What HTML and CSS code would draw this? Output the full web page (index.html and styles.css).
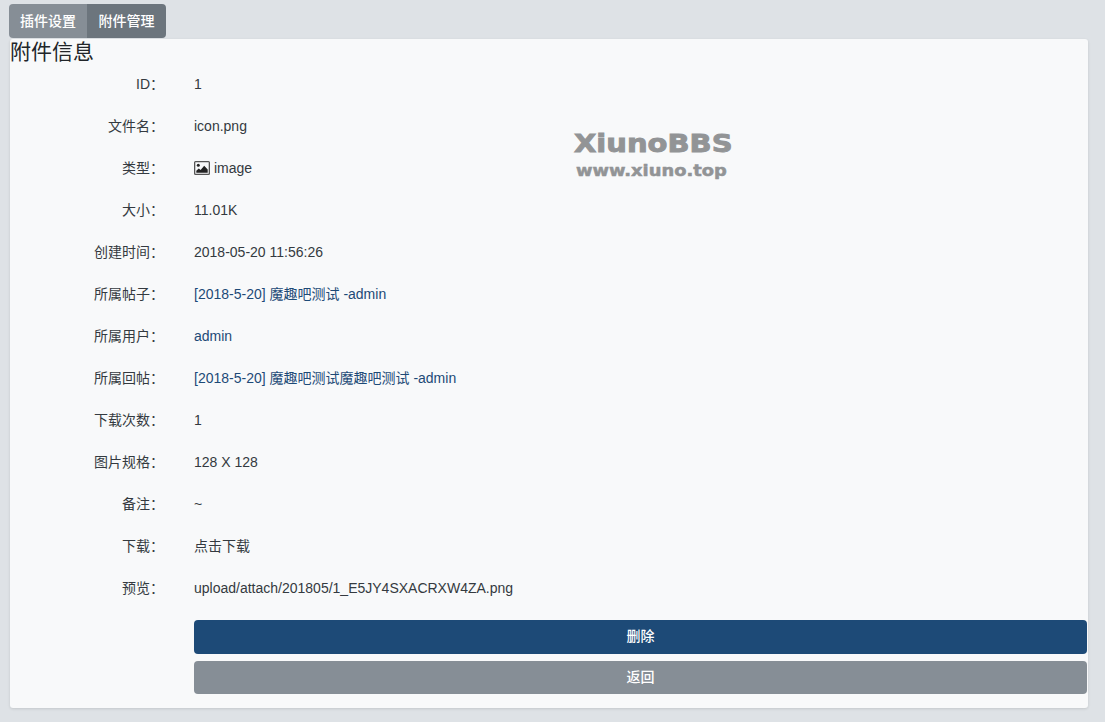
FILE: index.html
```html
<!DOCTYPE html>
<html lang="zh-CN">
<head>
<meta charset="utf-8">
<title>附件管理</title>
<link rel="stylesheet" href="styles.css">
</head>
<body>
<nav class="tabs">
  <a class="tab">插件设置</a>
  <a class="tab tab-active">附件管理</a>
</nav>
<main class="card">
  <h4 class="title">附件信息</h4>
  <div class="watermark" aria-label="XiunoBBS www.xiuno.top">
    <div class="wm-name">XiunoBBS</div>
    <div class="wm-url">www.xiuno.top</div>
  </div>
  <dl class="info">
    <div class="row"><dt>ID：</dt><dd>1</dd></div>
    <div class="row"><dt>文件名：</dt><dd>icon.png</dd></div>
    <div class="row"><dt>类型：</dt><dd class="type">
      <svg class="icon" viewBox="0 0 16 14" width="16" height="14"><path fill="#555" fill-rule="evenodd" d="M1.500 0h13A1.500 1.500 0 0 1 16 1.500v11a1.500 1.500 0 0 1-1.500 1.500h-13A1.500 1.500 0 0 1 0 12.500v-11A1.500 1.500 0 0 1 1.500 0zM1.300 1.300v11.400h13.400V1.300z"/><circle cx="4.300" cy="4.300" r="1.500" fill="#222"/><path fill="#222" d="M2.300 11.700V9.700l2.500-2.300 1.800 1.500 3.600-4.200 3.500 3.800v3.200z"/></svg>
      image</dd></div>
    <div class="row"><dt>大小：</dt><dd>11.01K</dd></div>
    <div class="row"><dt>创建时间：</dt><dd>2018-05-20 11:56:26</dd></div>
    <div class="row"><dt>所属帖子：</dt><dd class="link">[2018-5-20] 魔趣吧测试 -admin</dd></div>
    <div class="row"><dt>所属用户：</dt><dd class="link">admin</dd></div>
    <div class="row"><dt>所属回帖：</dt><dd class="link">[2018-5-20] 魔趣吧测试魔趣吧测试 -admin</dd></div>
    <div class="row"><dt>下载次数：</dt><dd>1</dd></div>
    <div class="row"><dt>图片规格：</dt><dd>128 X 128</dd></div>
    <div class="row"><dt>备注：</dt><dd>~</dd></div>
    <div class="row"><dt>下载：</dt><dd class="dark">点击下载</dd></div>
    <div class="row"><dt>预览：</dt><dd class="dark">upload/attach/201805/1_E5JY4SXACRXW4ZA.png</dd></div>
  </dl>
  <div class="actions">
    <button class="btn btn-primary">删除</button>
    <button class="btn btn-secondary">返回</button>
  </div>
</main>
</body>
</html>
```
FILE: styles.css
```css
* { box-sizing: border-box; }
html, body { height: 100%; }
body {
  margin: 0;
  padding: 4px 17px 0 9px;
  background: #dee2e6;
  color: #343a40;
  font-family: "Liberation Sans", "Noto Sans CJK SC", sans-serif;
  font-size: 14px;
  line-height: 21px;
}
.tabs {
  display: flex;
  width: 157px;
  height: 34px;
  border-radius: 4px;
  overflow: hidden;
}
.tab {
  flex: 1;
  display: flex;
  align-items: center;
  justify-content: center;
  color: #fff;
  font-size: 14px;
  font-weight: 500;
  background: #868e96;
}
.tab-active { background: #6c757d; flex: 0 0 79px; }
.card {
  position: relative;
  margin: 1px 0 0 1px;
  height: 669px;
  background: #f8f9fa;
  border-radius: 3px;
  box-shadow: 0 1px 3px rgba(0, 0, 0, .12);
}
.title {
  margin: 0;
  height: 24px;
  font-size: 21px;
  font-weight: 400;
  line-height: 25px;
  color: #212529;
}
.watermark {
  position: absolute;
  left: 564px;
  top: 90px;
  color: #929496;
  font-family: "DejaVu Sans", sans-serif;
  font-weight: 700;
  white-space: nowrap;
  -webkit-text-stroke: .9px #929496;
}
.wm-name {
  font-size: 25px;
  line-height: 30px;
  transform: scaleX(1.16);
  transform-origin: left center;
}
.wm-url {
  font-size: 15px;
  line-height: 20px;
  margin: 2px 0 0 2px;
  transform: scaleX(1.19);
  transform-origin: left center;
  -webkit-text-stroke-width: .5px;
}
.info { margin: 0; }
.row {
  display: grid;
  grid-template-columns: 154px 1fr;
  column-gap: 30px;
  height: 42px;
  align-items: center;
}
.row dt { text-align: right; font-weight: 400; }
.row dd { margin: 0; }
.type { display: flex; align-items: center; gap: 4px; }
.icon { flex: none; }
.link { color: #1d4a77; }
.dark { color: #343a40; }
.actions {
  display: flex;
  flex-direction: column;
  gap: 7px;
  margin: 11px 1px 0 184px;
}
.btn {
  height: 33.500px;
  padding: 0;
  border: 0;
  border-radius: 4px;
  color: #fff;
  font: inherit;
  font-weight: 500;
}
.btn-primary { background: #1d4a77; }
.btn-secondary { background: #868e96; }
```
